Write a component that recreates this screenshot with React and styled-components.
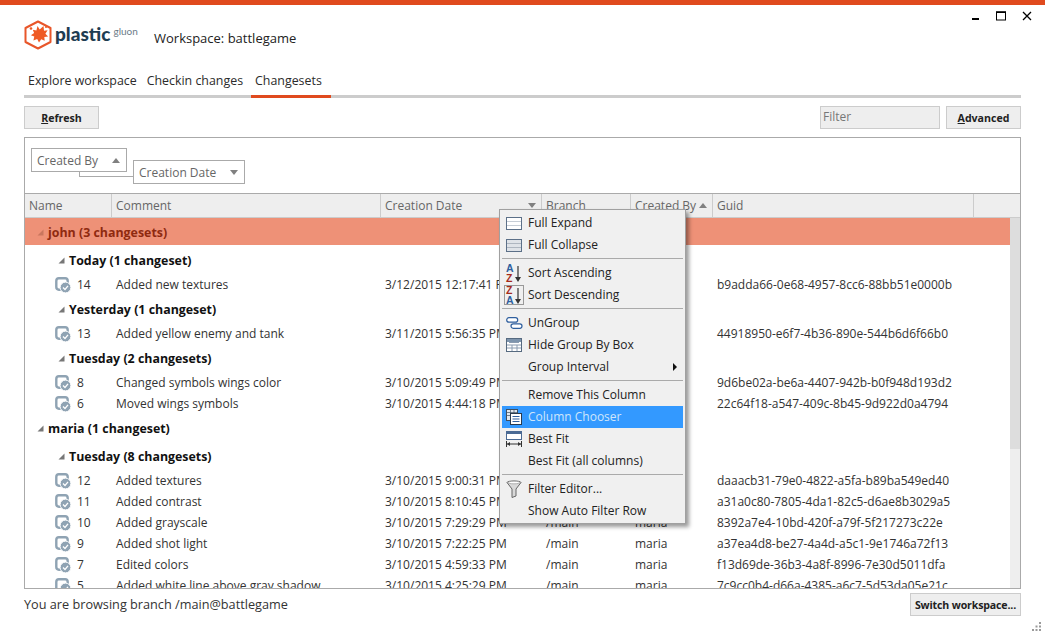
import React from 'react'
import styled, { createGlobalStyle } from 'styled-components'

const COLUMNS = '87px 269px 161px 89px 82px 261px 1fr'

const groups = [
  { type: 'user', label: 'john (3 changesets)', selected: true },
  { type: 'day', label: 'Today (1 changeset)' },
  { type: 'row', id: 14, comment: 'Added new textures', date: '3/12/2015 12:17:41 PM', user: 'john', guid: 'b9adda66-0e68-4957-8cc6-88bb51e0000b' },
  { type: 'day', label: 'Yesterday (1 changeset)' },
  { type: 'row', id: 13, comment: 'Added yellow enemy and tank', date: '3/11/2015 5:56:35 PM', user: 'john', guid: '44918950-e6f7-4b36-890e-544b6d6f66b0' },
  { type: 'day', label: 'Tuesday (2 changesets)' },
  { type: 'row', id: 8, comment: 'Changed symbols wings color', date: '3/10/2015 5:09:49 PM', user: 'john', guid: '9d6be02a-be6a-4407-942b-b0f948d193d2' },
  { type: 'row', id: 6, comment: 'Moved wings symbols', date: '3/10/2015 4:44:18 PM', user: 'john', guid: '22c64f18-a547-409c-8b45-9d922d0a4794' },
  { type: 'user', label: 'maria (1 changeset)' },
  { type: 'day', label: 'Tuesday (8 changesets)' },
  { type: 'row', id: 12, comment: 'Added textures', date: '3/10/2015 9:00:31 PM', user: 'maria', guid: 'daaacb31-79e0-4822-a5fa-b89ba549ed40' },
  { type: 'row', id: 11, comment: 'Added contrast', date: '3/10/2015 8:10:45 PM', user: 'maria', guid: 'a31a0c80-7805-4da1-82c5-d6ae8b3029a5' },
  { type: 'row', id: 10, comment: 'Added grayscale', date: '3/10/2015 7:29:29 PM', user: 'maria', guid: '8392a7e4-10bd-420f-a79f-5f217273c22e' },
  { type: 'row', id: 9, comment: 'Added shot light', date: '3/10/2015 7:22:25 PM', user: 'maria', guid: 'a37ea4d8-be27-4a4d-a5c1-9e1746a72f13' },
  { type: 'row', id: 7, comment: 'Edited colors', date: '3/10/2015 4:59:33 PM', user: 'maria', guid: 'f13d69de-36b3-4a8f-8996-7e30d5011dfa' },
  { type: 'row', id: 5, comment: 'Added white line above gray shadow', date: '3/10/2015 4:25:29 PM', user: 'maria', guid: '7c9cc0b4-d66a-4385-a6c7-5d53da05e21c' },
]

function CheckinIcon() {
  return (
    <svg width="16" height="16" viewBox="0 0 16 16">
      <rect x="1.3" y="1.3" width="11.4" height="11.4" rx="2.6" fill="none" stroke="#8fa3b3" strokeWidth="2.4" />
      <circle cx="10.5" cy="10.5" r="5.4" fill="#8fa3b3" stroke="#fff" strokeWidth="1" />
      <path d="M8 10.5l2 2 3-3.6" fill="none" stroke="#fff" strokeWidth="1.3" />
    </svg>
  )
}

function ExpandArrow({ color }) {
  return (
    <svg width="7" height="7" viewBox="0 0 7 7">
      <polygon points="6.5,0.5 6.5,6.5 0.5,6.5" fill={color} />
    </svg>
  )
}

function SortArrow({ up }) {
  return (
    <SortGlyph width="8" height="5" viewBox="0 0 8 5">
      <polygon points={up ? '4,0 8,5 0,5' : '0,0 8,0 4,5'} fill="#808080" />
    </SortGlyph>
  )
}

function RowsIcon({ expanded }) {
  return (
    <svg width="16" height="13" viewBox="0 0 16 13">
      <rect x="0.5" y="0.5" width="15" height="12" fill={expanded ? '#fff' : '#dfe3e8'} stroke="#5c7088" />
      <path d="M1 4.5h14M1 8.5h14" stroke={expanded ? '#c7ced6' : '#aeb6c0'} />
    </svg>
  )
}

function SortIcon({ top, bottom, topColor, bottomColor }) {
  return (
    <svg width="18" height="20" viewBox="0 0 18 20">
      <text x="1" y="9" fontFamily="Liberation Sans" fontWeight="700" fontSize="10.5" fill={topColor}>{top}</text>
      <text x="1" y="18.5" fontFamily="Liberation Sans" fontWeight="700" fontSize="10.5" fill={bottomColor}>{bottom}</text>
      <path d="M13 3v13" stroke="#333" strokeWidth="1.2" />
      <polygon points="10,14 16,14 13,19" fill="#333" />
    </svg>
  )
}

function UngroupIcon() {
  return (
    <svg width="17" height="12" viewBox="0 0 17 12">
      <rect x="0.7" y="0.7" width="11" height="4.4" rx="2.2" fill="#fff" stroke="#2f5f9e" strokeWidth="1.2" />
      <rect x="5" y="6.9" width="11" height="4.4" rx="2.2" fill="#fff" stroke="#2f5f9e" strokeWidth="1.2" />
    </svg>
  )
}

function TableIcon() {
  return (
    <svg width="16" height="14" viewBox="0 0 16 14">
      <rect x="0.5" y="0.5" width="15" height="13" fill="#fff" stroke="#566a80" />
      <path d="M1 1h14v3H1z" fill="#7d94ad" />
      <path d="M3 4.5h10M1 7h14M1 10h14M6 7v6M11 7v6" stroke="#8a9bb0" />
    </svg>
  )
}

function ChooserIcon() {
  return (
    <svg width="16" height="16" viewBox="0 0 16 16">
      <rect x="0.5" y="0.5" width="11" height="11" fill="#dfe6ee" stroke="#3f4f60" />
      <path d="M1 3.5h10M1 6.5h10M4.5 1v10M8 1v10" stroke="#3f4f60" strokeWidth="0.7" />
      <rect x="4.5" y="4.5" width="11" height="11" fill="#fff" stroke="#2a3a4c" />
      <path d="M6.5 7.5h7M6.5 10h7M6.5 12.5h7" stroke="#2f5f9e" />
    </svg>
  )
}

function BestFitIcon() {
  return (
    <svg width="16" height="16" viewBox="0 0 16 16">
      <rect x="0.5" y="0.5" width="15" height="8" fill="#fff" stroke="#4a6a94" />
      <path d="M1 2h14" stroke="#4a6a94" strokeWidth="2" />
      <path d="M0.5 10v6M15.5 10v6M1 13h14" stroke="#333" />
      <polygon points="1,13 4,11 4,15" fill="#333" />
      <polygon points="15,13 12,11 12,15" fill="#333" />
    </svg>
  )
}

function FunnelIcon() {
  return (
    <svg width="16" height="18" viewBox="0 0 16 18">
      <path d="M1 2.5c0-2 14-2 14 0L10 9v7l-4 1.5V9z" fill="#d8d8d8" stroke="#666" />
      <ellipse cx="8" cy="2.5" rx="6" ry="1.3" fill="#fff" stroke="#888" strokeWidth="0.6" />
    </svg>
  )
}

const menu = [
  [{ label: 'Full Expand', icon: <RowsIcon expanded /> }, { label: 'Full Collapse', icon: <RowsIcon /> }],
  [
    { label: 'Sort Ascending', icon: <SortIcon top="A" bottom="Z" topColor="#2f5f9e" bottomColor="#a52a1a" /> },
    { label: 'Sort Descending', icon: <SortIcon top="Z" bottom="A" topColor="#a52a1a" bottomColor="#2f5f9e" />, boxed: true },
  ],
  [
    { label: 'UnGroup', icon: <UngroupIcon /> },
    { label: 'Hide Group By Box', icon: <TableIcon /> },
    { label: 'Group Interval', more: true },
  ],
  [
    { label: 'Remove This Column' },
    { label: 'Column Chooser', icon: <ChooserIcon />, active: true },
    { label: 'Best Fit', icon: <BestFitIcon /> },
    { label: 'Best Fit (all columns)' },
  ],
  [{ label: 'Filter Editor...', icon: <FunnelIcon /> }, { label: 'Show Auto Filter Row' }],
]

export default function App() {
  return (
    <>
      <GlobalStyle />
      <Window>
        <TopBar />
        <Header>
          <Logo>
            <svg width="28" height="30" viewBox="0 0 28 30">
              <polygon points="14,1.5 26.5,8 26.5,22 14,28.5 1.5,22 1.5,8" fill="none" stroke="#e8562a" strokeWidth="2" strokeLinejoin="round" />
              <path d="M13.5 6l2.2 3.6 3.8-3.6 .5 4.8 3.6-.6-2.2 3.6 2.7 2.6-3.8.7.4 3.7-3.5-1.6-2.2 3.2-1.8-3.3-3.8 1.3.9-3.8-3.4-1.4 3.2-2.1-1.3-3.3 3.6.7z" fill="#ef5a24" />
              <circle cx="7" cy="8.5" r="1.3" fill="#ef5a24" />
              <circle cx="22" cy="7" r="1" fill="#ef5a24" />
            </svg>
            <LogoName>plastic</LogoName>
            <LogoSuffix>gluon</LogoSuffix>
          </Logo>
          <Workspace>Workspace: battlegame</Workspace>
          <WindowControls>
            <svg width="9" height="9" viewBox="0 0 9 9"><path d="M1 8h7" stroke="#000" strokeWidth="2" /></svg>
            <svg width="10" height="10" viewBox="0 0 10 10"><rect x="0.5" y="1" width="9" height="8" fill="none" stroke="#000" strokeWidth="1" /><path d="M0 1.2h10" stroke="#000" strokeWidth="1.6" /></svg>
            <svg width="10" height="10" viewBox="0 0 10 10"><path d="M1 1l8 8M9 1l-8 8" stroke="#000" strokeWidth="1.3" /></svg>
          </WindowControls>
        </Header>

        <Tabs>
          <Tab>Explore workspace</Tab>
          <Tab>Checkin changes</Tab>
          <Tab $active>Changesets</Tab>
        </Tabs>

        <Toolbar>
          <Button $width={75}><u>R</u>efresh</Button>
          <FilterBox>Filter</FilterBox>
          <Button $width={75}><u>A</u>dvanced</Button>
        </Toolbar>

        <Panel>
          <GroupBox>
            <GroupChip $width={96}>Created By<SortArrow up /></GroupChip>
            <GroupChip $width={112} $nested>Creation Date<SortArrow /></GroupChip>
          </GroupBox>
          <HeaderRow>
            <HeaderCell>Name</HeaderCell>
            <HeaderCell>Comment</HeaderCell>
            <HeaderCell>Creation Date<SortArrow /></HeaderCell>
            <HeaderCell>Branch</HeaderCell>
            <HeaderCell>Created By<SortArrow up /></HeaderCell>
            <HeaderCell>Guid</HeaderCell>
            <HeaderCell />
          </HeaderRow>
          <Body>
            <Rows>
              {groups.map((item, i) => {
                if (item.type === 'user') {
                  return (
                    <UserRow key={i} $selected={item.selected}>
                      <ExpandArrow color={item.selected ? '#c9765e' : '#777'} />
                      {item.label}
                    </UserRow>
                  )
                }
                if (item.type === 'day') {
                  return (
                    <DayRow key={i}>
                      <ExpandArrow color="#777" />
                      {item.label}
                    </DayRow>
                  )
                }
                return (
                  <DataRow key={i}>
                    <NameCell><CheckinIcon />{item.id}</NameCell>
                    <Cell>{item.comment}</Cell>
                    <Cell>{item.date}</Cell>
                    <Cell>/main</Cell>
                    <Cell>{item.user}</Cell>
                    <Cell>{item.guid}</Cell>
                  </DataRow>
                )
              })}
            </Rows>
            <ScrollTrack><ScrollThumb /></ScrollTrack>
          </Body>
        </Panel>

        <StatusBar>
          <StatusText>You are browsing branch /main@battlegame</StatusText>
          <Button $width={111} $tight>Switch workspace...</Button>
        </StatusBar>

        <ContextMenu>
          {menu.map((section, s) => (
            <React.Fragment key={s}>
              {s > 0 && <MenuSeparator />}
              {section.map((item) => (
                <MenuItem key={item.label} $active={item.active}>
                  <MenuIcon $boxed={item.boxed}>{item.icon}</MenuIcon>
                  {item.label}
                  {item.more && <MenuCaret />}
                </MenuItem>
              ))}
            </React.Fragment>
          ))}
        </ContextMenu>

        <ResizeGrip>
          <svg width="10" height="10" viewBox="0 0 10 10" fill="#9a9a9a">
            <rect x="7" y="0" width="2" height="2" />
            <rect x="3.5" y="3.5" width="2" height="2" />
            <rect x="7" y="3.5" width="2" height="2" />
            <rect x="0" y="7" width="2" height="2" />
            <rect x="3.5" y="7" width="2" height="2" />
            <rect x="7" y="7" width="2" height="2" />
          </svg>
        </ResizeGrip>
      </Window>
    </>
  )
}

const GlobalStyle = createGlobalStyle`
  html, body {
    margin: 0;
    padding: 0;
    background: #fff;
    overflow: hidden;
  }
  * {
    box-sizing: border-box;
  }
`;

const Window = styled.div`
  position: relative;
  width: 1045px;
  height: 636px;
  overflow: hidden;
  font-family: "Open Sans", "Noto Sans", sans-serif;
  font-size: 12px;
  color: #333;
`;

const TopBar = styled.div`
  height: 5px;
  background: #e04a1e;
`;

const Header = styled.div`
  display: flex;
  align-items: flex-start;
  height: 62px;
  padding-left: 24px;
`;

const Logo = styled.div`
  display: flex;
  align-items: flex-start;
  width: 130px;
  margin-top: 15px;
`;

const LogoName = styled.span`
  margin-left: 3px;
  margin-top: 2px;
  font-family: "Lato", sans-serif;
  font-size: 19px;
  font-weight: 900;
  line-height: 24px;
  color: #1f3d52;
`;

const LogoSuffix = styled.span`
  margin-left: 3px;
  margin-top: 5px;
  font-family: "Lato", sans-serif;
  font-size: 10px;
  line-height: 12px;
  color: #6b7c88;
`;

const Workspace = styled.div`
  margin-top: 24px;
  font-size: 13px;
  line-height: 18px;
  color: #222;
`;

const WindowControls = styled.div`
  display: flex;
  align-items: flex-start;
  gap: 16px;
  margin-left: auto;
  margin-top: 6px;
  padding-right: 13px;
`;

const Tabs = styled.div`
  display: flex;
  height: 31px;
  margin: 0 24px;
  border-bottom: 3px solid #ccc;
`;

const Tab = styled.div`
  height: 31px;
  padding: 5px ${(p) => (p.$active ? '9px' : '4px')} 0 4px;
  margin: 0 2px 0 ${(p) => (p.$active ? '2px' : '0')};
  line-height: 18px;
  color: #2b2b2b;
  border-bottom: 3px solid ${(p) => (p.$active ? '#e04a1e' : 'transparent')};
  font-size: 12.4px;
`;

const Toolbar = styled.div`
  display: flex;
  gap: 6px;
  margin: 8px 24px 0;
  height: 23px;
`;

const Button = styled.div`
  display: flex;
  align-items: center;
  justify-content: center;
  flex-shrink: 0;
  width: ${(p) => p.$width}px;
  height: 23px;
  background: #eee;
  border: 1px solid #ccc;
  font-size: 10.6px;
  font-weight: 700;
  letter-spacing: ${(p) => (p.$tight ? '-0.15px' : '0')};
  color: #222;
  white-space: pre;
`;

const FilterBox = styled.div`
  width: 120px;
  height: 23px;
  margin-left: auto;
  padding: 0 2px;
  background: #eee;
  border: 1px solid #ccc;
  font-size: 12px;
  line-height: 20px;
  color: #777;
`;

const Panel = styled.div`
  display: flex;
  flex-direction: column;
  height: 452px;
  margin: 8px 24px 0;
  border: 1px solid #aaa;
  overflow: hidden;
`;

const GroupBox = styled.div`
  display: flex;
  align-items: flex-start;
  gap: 6px;
  flex-shrink: 0;
  height: 56px;
  padding: 10px 6px 0;
  border-bottom: 1px solid #aaa;
`;

const GroupChip = styled.div`
  position: relative;
  display: flex;
  align-items: center;
  justify-content: space-between;
  width: ${(p) => p.$width}px;
  height: 24px;
  margin-top: ${(p) => (p.$nested ? '12px' : '0')};
  padding: 0 6px 0 5px;
  background: #fff;
  border: 1px solid #aaa;
  color: #666;

  ${(p) =>
    p.$nested &&
    `&::before {
      content: '';
      position: absolute;
      left: -55px;
      top: 11px;
      width: 54px;
      height: 4px;
      border-left: 1px solid #aaa;
      border-bottom: 1px solid #aaa;
    }`}
`;

const SortGlyph = styled.svg`
  flex-shrink: 0;
`;

const HeaderRow = styled.div`
  display: grid;
  grid-template-columns: ${COLUMNS};
  flex-shrink: 0;
  height: 24px;
  background: #eee;
  border-bottom: 1px solid #ccc;
`;

const HeaderCell = styled.div`
  display: flex;
  align-items: center;
  justify-content: space-between;
  padding: 0 5px 0 4px;
  border-right: 1px solid #ccc;
  color: #666;
  white-space: nowrap;

  &:last-child {
    border-right: none;
  }
`;

const Body = styled.div`
  display: flex;
  flex: 1;
  min-height: 0;
`;

const Rows = styled.div`
  flex: 1;
  min-width: 0;
`;

const UserRow = styled.div`
  display: flex;
  align-items: center;
  gap: 4px;
  height: ${(p) => (p.$selected ? '27px' : '28px')};
  padding: 2px 0 0 12px;
  background: ${(p) => (p.$selected ? '#ee9177' : 'transparent')};
  color: ${(p) => (p.$selected ? '#8f2a10' : '#111')};
  font-size: 12.4px;
  font-weight: 700;
`;

const DayRow = styled.div`
  display: flex;
  align-items: center;
  gap: 4px;
  height: 28px;
  padding: 2px 0 0 33px;
  color: #111;
  font-size: 12.4px;
  font-weight: 700;
`;

const DataRow = styled.div`
  display: grid;
  grid-template-columns: ${COLUMNS};
  height: 21px;
  padding-top: 2px;
  align-items: center;
`;

const Cell = styled.div`
  padding-left: 4px;
  white-space: nowrap;
  overflow: hidden;
`;

const NameCell = styled.div`
  display: flex;
  align-items: center;
  gap: 6px;
  padding-left: 30px;
`;

const ScrollTrack = styled.div`
  width: 10px;
  background: #eee;
  flex-shrink: 0;
`;

const ScrollThumb = styled.div`
  height: 231px;
  background: #ddd;
`;

const StatusBar = styled.div`
  display: flex;
  align-items: center;
  justify-content: space-between;
  height: 23px;
  margin: 4px 24px 0;
  font-size: 12.7px;
`;

const StatusText = styled.span`
  margin-bottom: 2px;
`;

const ContextMenu = styled.div`
  position: absolute;
  left: 499px;
  top: 209px;
  width: 187px;
  height: 315px;
  padding: 2px;
  background: #f0f0f0;
  border: 1px solid #a0a0a0;
  box-shadow: 3px 3px 4px rgba(0, 0, 0, 0.4);
  z-index: 5;
`;

const MenuItem = styled.div`
  position: relative;
  display: flex;
  align-items: center;
  height: 22px;
  padding: 0 0 2px 2px;
  background: ${(p) => (p.$active ? '#3399ff' : 'transparent')};
  color: ${(p) => (p.$active ? '#cfe6fb' : '#222')};
  white-space: nowrap;
`;

const MenuIcon = styled.span`
  display: flex;
  align-items: center;
  justify-content: center;
  width: 20px;
  height: 20px;
  margin: 2px 4px 0 0;
  ${(p) => p.$boxed && 'box-shadow: inset 0 0 0 1px #999;'}
`;

const MenuCaret = styled.span`
  position: absolute;
  right: 6px;
  top: 7px;
  border-left: 4px solid #111;
  border-top: 4px solid transparent;
  border-bottom: 4px solid transparent;
`;

const MenuSeparator = styled.div`
  height: 6px;
  border: solid transparent;
  border-width: 2px 0 3px;
  background: #aaa;
  background-clip: padding-box;
`;

const ResizeGrip = styled.div`
  position: absolute;
  right: 3px;
  bottom: 4px;
  line-height: 0;
`;
